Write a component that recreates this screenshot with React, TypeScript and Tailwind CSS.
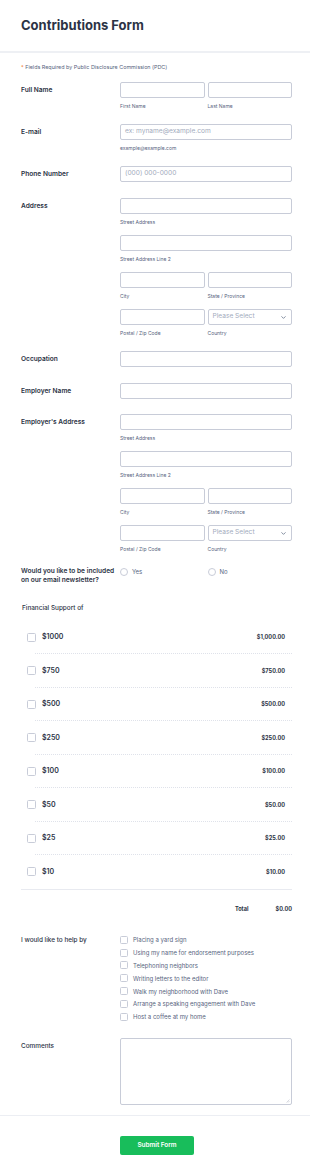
import React from "react";
import { ChevronDown } from "lucide-react";

const Label: React.FC<{ children: React.ReactNode; className?: string }> = ({ children, className }) => (
  <div className={`w-[99px] shrink-0 text-[6.6px] leading-[16px] font-semibold text-[#2c3345] ${className ?? ""}`}>{children}</div>
);

const Box: React.FC<{ placeholder?: string; select?: boolean }> = ({ placeholder, select }) => (
  <div className="h-[16px] w-full rounded-[2px] border border-[#c8ccd8] bg-white flex items-center justify-between px-[4px]">
    <span className="text-[6.6px] text-[#a3abbd]">{placeholder}</span>
    {select && <ChevronDown className="w-[7px] h-[7px] text-[#57647e]" strokeWidth={2.5} />}
  </div>
);

const Sub: React.FC<{ children: React.ReactNode }> = ({ children }) => (
  <div className="mt-[5px] text-[5px] leading-[6px] text-[#57647e]">{children}</div>
);

const Address = () => (
  <div className="flex-1 flex flex-col gap-[10px]">
    <div>
      <Box />
      <Sub>Street Address</Sub>
    </div>
    <div>
      <Box />
      <Sub>Street Address Line 2</Sub>
    </div>
    <div className="grid grid-cols-2 gap-[3px]">
      <div>
        <Box />
        <Sub>City</Sub>
      </div>
      <div>
        <Box />
        <Sub>State / Province</Sub>
      </div>
    </div>
    <div className="grid grid-cols-2 gap-[3px]">
      <div>
        <Box />
        <Sub>Postal / Zip Code</Sub>
      </div>
      <div>
        <Box placeholder="Please Select" select />
        <Sub>Country</Sub>
      </div>
    </div>
  </div>
);

const products = [
  ["$1000", "$1,000.00"],
  ["$750", "$750.00"],
  ["$500", "$500.00"],
  ["$250", "$250.00"],
  ["$100", "$100.00"],
  ["$50", "$50.00"],
  ["$25", "$25.00"],
  ["$10", "$10.00"],
];

const helps = [
  "Placing a yard sign",
  "Using my name for endorsement purposes",
  "Telephoning neighbors",
  "Writing letters to the editor",
  "Walk my neighborhood with Dave",
  "Arrange a speaking engagement with Dave",
  "Host a coffee at my home",
];

export default function App() {
  return (
    <div className="w-[310px] min-h-[1163px] bg-white font-['Inter',sans-serif] text-[#2c3345]">
      <div className="h-[53px] pl-[21px] pt-[15px] border-b-2 border-[#eef0f4]">
        <h1 className="text-[13px] leading-[20px] font-bold">Contributions Form</h1>
      </div>

      <div className="pl-[21px] pr-[18px]">
        <p className="mt-[10px] text-[5.4px] leading-[8px] text-[#57647e]">
          <span className="text-[#f07c30]">*</span> Fields Required by Public Disclosure Commission (PDC)
        </p>

        <div className="flex mt-[11px]">
          <Label>Full Name</Label>
          <div className="flex-1 grid grid-cols-2 gap-[3px]">
            <div>
              <Box />
              <Sub>First Name</Sub>
            </div>
            <div>
              <Box />
              <Sub>Last Name</Sub>
            </div>
          </div>
        </div>

        <div className="flex mt-[15px]">
          <Label>E-mail</Label>
          <div className="flex-1">
            <Box placeholder="ex: myname@example.com" />
            <Sub>example@example.com</Sub>
          </div>
        </div>

        <div className="flex mt-[15px]">
          <Label>Phone Number</Label>
          <div className="flex-1">
            <Box placeholder="(000) 000-0000" />
          </div>
        </div>

        <div className="flex mt-[16px]">
          <Label>Address</Label>
          <Address />
        </div>

        <div className="flex mt-[15px]">
          <Label>Occupation</Label>
          <div className="flex-1">
            <Box />
          </div>
        </div>

        <div className="flex mt-[16px]">
          <Label>Employer Name</Label>
          <div className="flex-1">
            <Box />
          </div>
        </div>

        <div className="flex mt-[15px]">
          <Label>Employer's Address</Label>
          <Address />
        </div>

        <div className="flex mt-[15px]">
          <div className="w-[99px] shrink-0 text-[6.6px] leading-[9px] font-semibold">
            Would you like to be included on our email newsletter?
          </div>
          <div className="flex-1 grid grid-cols-2 gap-[3px] h-[9px]">
            <div className="flex items-center gap-[4px]">
              <span className="w-[8px] h-[8px] rounded-full border border-[#c8ccd8]" />
              <span className="text-[6px] text-[#57647e]">Yes</span>
            </div>
            <div className="flex items-center gap-[4px]">
              <span className="w-[8px] h-[8px] rounded-full border border-[#c8ccd8]" />
              <span className="text-[6px] text-[#57647e]">No</span>
            </div>
          </div>
        </div>

        <div className="mt-[19px] pl-[1px] text-[6.4px] leading-[8px] font-medium">Financial Support of</div>

        <div className="mt-[8.5px]">
          {products.map(([name, price], i) => (
            <div key={name} className="h-[33.5px] relative flex items-center pl-[6px] pr-[7px]">
              <span className="w-[9px] h-[9px] rounded-[1.5px] border border-[#c8ccd8] bg-white" />
              <span className="ml-[6px] text-[7px] font-semibold">{name}</span>
              <span className="ml-auto text-[5.6px] font-bold">{price}</span>
              {i < products.length - 1 && (
                <div className="absolute left-[14px] right-0 bottom-0 border-b border-dotted border-[#dfe2ea]" />
              )}
            </div>
          ))}
          <div className="mt-[0.5px] border-t border-[#e8eaf0]" />
          <div className="flex justify-end pt-[14.5px] leading-[8px] text-[5.6px] font-bold">
            <span>Total</span>
            <span className="ml-[27px]">$0.00</span>
          </div>
        </div>

        <div className="flex mt-[21px]">
          <div className="w-[99px] shrink-0 text-[6.4px] leading-[12.8px] font-medium">I would like to help by</div>
          <div className="flex-1">
            {helps.map((h) => (
              <div key={h} className="h-[12.8px] flex items-center gap-[5px]">
                <span className="w-[8px] h-[8px] rounded-[1.5px] border border-[#c8ccd8] bg-white" />
                <span className="text-[6px] text-[#57647e]">{h}</span>
              </div>
            ))}
          </div>
        </div>

        <div className="flex mt-[14.5px]">
          <div className="w-[99px] shrink-0 text-[6.4px] leading-[16px] font-medium">Comments</div>
          <div className="flex-1 h-[67px] rounded-[2px] border border-[#c8ccd8] relative">
            <svg className="absolute right-[1px] bottom-[1px]" width="4" height="4" viewBox="0 0 4 4">
              <path d="M3.5 0.5L0.5 3.5M3.5 2L2 3.5" stroke="#b0b5c2" strokeWidth="0.5" />
            </svg>
          </div>
        </div>
      </div>

      <div className="mt-[10px] border-t border-[#eceef3]" />

      <div className="pl-[120px] mt-[13px] pb-[17px]">
        <button className="w-[74px] h-[19px] rounded-[2px] bg-[#18bd5b] text-white text-[6.4px] font-semibold">
          Submit Form
        </button>
      </div>
    </div>
  );
}
